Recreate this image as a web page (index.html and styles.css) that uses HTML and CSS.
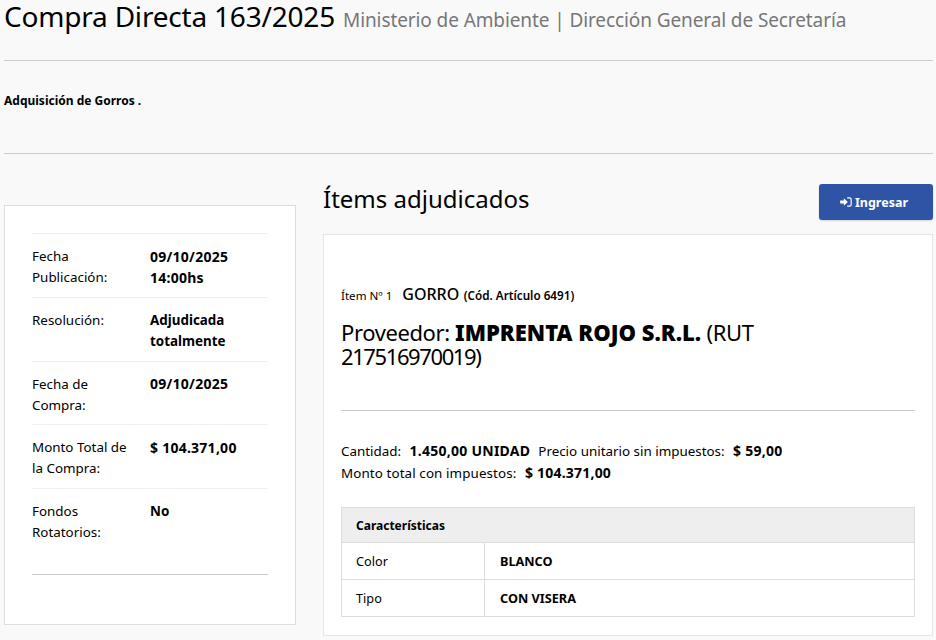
FILE: index.html
```html
<!DOCTYPE html>
<html lang="es">
<head>
<meta charset="utf-8">
<title>Compra Directa 163/2025</title>
<link rel="stylesheet" href="styles.css">
</head>
<body>
<header class="page-head">
  <h1 class="title">Compra Directa 163/2025 <small class="org">Ministerio de Ambiente | Dirección General de Secretaría</small></h1>
  <hr class="rule rule-top">
  <p class="summary">Adquisición de Gorros .</p>
  <hr class="rule rule-bottom">
</header>
<main class="layout">
  <aside class="side-card">
    <dl class="facts">
      <div class="fact"><dt>Fecha Publicación:</dt><dd class="num">09/10/2025 14:00hs</dd></div>
      <div class="fact"><dt>Resolución:</dt><dd>Adjudicada totalmente</dd></div>
      <div class="fact"><dt>Fecha de Compra:</dt><dd class="num">09/10/2025</dd></div>
      <div class="fact"><dt>Monto Total de la Compra:</dt><dd class="num">$ 104.371,00</dd></div>
      <div class="fact"><dt>Fondos Rotatorios:</dt><dd>No</dd></div>
    </dl>
    <hr class="rule">
  </aside>
  <section class="items">
    <div class="items-head">
      <h2 class="items-title">Ítems adjudicados</h2>
      <a class="btn" href="#"><svg class="btn-icon" viewBox="0 0 14 12" aria-hidden="true"><path fill="#fff" d="M0 4.2h4.4V1.6L9.2 6l-4.8 4.4V7.8H0z"/><path fill="none" stroke="#fff" stroke-width="1.4" d="M8.4 1h2.8a2 2 0 0 1 2 2v6a2 2 0 0 1-2 2H8.4"/></svg>Ingresar</a>
    </div>
    <article class="item-card">
      <p class="item-line"><span class="item-no">Ítem Nº 1</span><strong class="item-name">GORRO</strong> <strong class="item-code">(Cód. Artículo 6491)</strong></p>
      <h3 class="supplier">Proveedor: <strong>IMPRENTA ROJO S.R.L.</strong> (RUT <span class="rut">217516970019)</span></h3>
      <hr class="rule">
      <div class="amounts">
        <p class="amount-row"><span class="amount">Cantidad: <strong>1.450,00 UNIDAD</strong></span><span class="amount">Precio unitario sin impuestos: <strong>$ 59,00</strong></span></p>
        <p class="amount-row"><span class="amount amount-wide">Monto total con impuestos: <strong>$ 104.371,00</strong></span></p>
      </div>
      <table class="specs">
        <colgroup><col class="spec-col"><col></colgroup>
        <thead><tr><th colspan="2">Características</th></tr></thead>
        <tbody>
          <tr><td class="spec-name">Color</td><td class="spec-value">BLANCO</td></tr>
          <tr><td class="spec-name">Tipo</td><td class="spec-value">CON VISERA</td></tr>
        </tbody>
      </table>
    </article>
  </section>
</main>
</body>
</html>
```
FILE: styles.css
```css
* { box-sizing: border-box; }
html, body { height: 640px; overflow: hidden; }
body {
  margin: 0;
  padding: 0 3px 0 4px;
  background: #f9f9f9;
  color: #000;
  font-family: "Noto Sans", "Open Sans", sans-serif;
  font-size: 13.4px;
  line-height: 21px;
}
.title {
  margin: 0;
  height: 36px;
  font-size: 28px;
  line-height: 33px;
  font-weight: 400;
  letter-spacing: -0.2px;
}
.org {
  margin-left: 1px;
  font-size: 19px;
  color: #777;
  letter-spacing: -0.1px;
}
.rule {
  margin: 0;
  border: 0;
  border-top: 1px solid #ccc;
}
.rule-top { margin-top: 24px; }
.summary {
  margin: 0;
  height: 92px;
  padding-top: 29px;
  font-size: 12px;
  font-weight: 700;
}
.layout {
  display: grid;
  grid-template-columns: 292px 610px;
  column-gap: 27px;
  align-items: start;
}
.side-card {
  margin-top: 51px;
  height: 420px;
  padding: 27px 27px 0;
  background: #fff;
  border: 1px solid #ddd;
}
.facts { margin: 0; }
.fact {
  display: grid;
  grid-template-columns: 118px 118px;
  height: 63.75px;
  padding-top: 12px;
  border-top: 1px solid #f0f0f0;
}
.fact dt { font-weight: 400; padding-right: 14px; }
.fact dd { margin: 0; font-weight: 700; font-size: 13.4px; }
.fact dd.num { margin-top: -0.5px; font-size: 14px; letter-spacing: 0.25px; }
.side-card .rule { margin-top: 22px; }
.items { margin-top: 30px; }
.items-head {
  display: flex;
  justify-content: space-between;
  align-items: flex-start;
  height: 50px;
}
.items-title {
  margin: 0;
  font-size: 24px;
  line-height: 30px;
  font-weight: 400;
}
.btn {
  display: flex;
  align-items: center;
  justify-content: center;
  gap: 3px;
  width: 114px;
  height: 36px;
  padding-right: 4px;
  background: #2f54a5;
  border-radius: 3px;
  box-shadow: 0 1px 2px rgba(0, 0, 0, 0.15);
  color: #fff;
  font-size: 12.5px;
  font-weight: 700;
  text-decoration: none;
}
.btn-icon { width: 12px; height: 10px; }
.item-card {
  height: 402px;
  padding: 48px 17px 0;
  background: #fff;
  border: 1px solid #e5e5e5;
}
.item-line { margin: 0; height: 24px; line-height: 22px; }
.item-no { font-size: 11.6px; margin-right: 10px; }
.item-name { font-size: 16px; font-weight: 500; }
.item-code { margin-left: 1px; font-size: 11.7px; font-weight: 600; }
.supplier {
  margin: 13px 0 0;
  height: 90px;
  padding-right: 50px;
  font-size: 22px;
  line-height: 24px;
  font-weight: 400;
  letter-spacing: -0.4px;
}
.supplier strong { font-weight: 900; letter-spacing: 0; }
.rut { letter-spacing: -1.4px; }
.amounts { margin: 29px 0 0; height: 67px; }
.amount-row { margin: 0; height: 22px; line-height: 22px; }
.amount { margin-right: 8px; }
.amount strong { margin-left: 5px; font-weight: 700; font-size: 14px; letter-spacing: 0.25px; }
.amount-wide { letter-spacing: 0.1px; }
.amount-wide strong { letter-spacing: 0.2px; }
.specs {
  width: 574px;
  border-collapse: collapse;
  table-layout: fixed;
  font-size: 12.7px;
}
.spec-col { width: 143px; }
.specs th, .specs td {
  border: 1px solid #ddd;
  padding: 0 15px;
  text-align: left;
}
.specs th, .specs .spec-name { padding-left: 14px; }
.specs th { height: 35px; background: #eee; font-weight: 700; font-size: 12px; }
.specs td { height: 37px; }
.spec-value { font-weight: 700; }
```
